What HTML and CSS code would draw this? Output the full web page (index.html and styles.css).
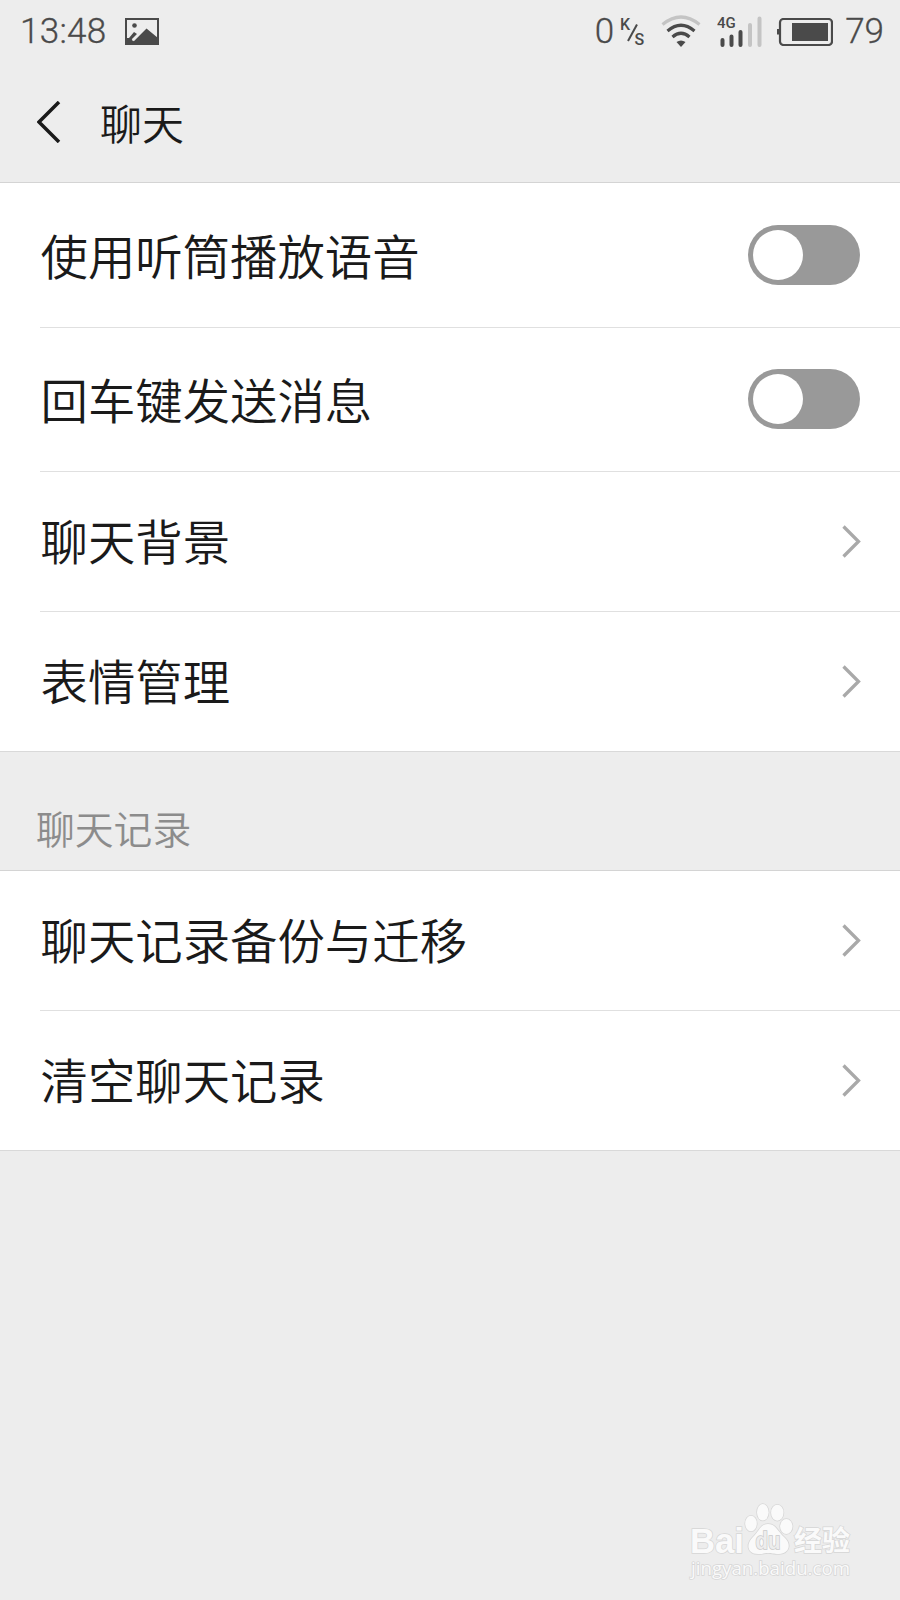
FILE: index.html
```html
<!DOCTYPE html>
<html lang="zh-CN">
<head>
    <meta charset="UTF-8">
    <meta name="viewport" content="width=device-width, initial-scale=1.0">
    <title>聊天</title>
    <link rel="stylesheet" href="styles.css">
</head>
<body>
    <div class="statusbar">
        <span class="time">13:48</span>
        <svg class="icon-photo" width="34" height="28" viewBox="0 0 34 28">
            <path d="M1 1H33V26H1Z" fill="none" stroke="#4a4a4a" stroke-width="2"/>
            <path d="M1 20L4 20L9 14L12 16L7 21L9 23L21.500 10.500L33 20V27H1Z" fill="#4a4a4a"/>
            <path d="M7.500 22.500L13.500 16.500" stroke="#ededed" stroke-width="2"/>
            <circle cx="9.500" cy="7.500" r="2.300" fill="#4a4a4a"/>
        </svg>
        <div class="status-right">
            <span class="speed">0</span>
            <svg class="icon-rate" width="26" height="36" viewBox="0 -4 26 36">
                <text x="0" y="11.500" class="rate-text">K</text>
                <path d="M8 23L17 6.500" stroke="#4a4a4a" stroke-width="2"/>
                <text x="14.500" y="26.500" class="rate-text">S</text>
            </svg>
            <svg class="icon-wifi" width="40" height="34" viewBox="0 0 40 34" fill="none" stroke-width="3.200">
                <path d="M1.500 9.500Q20 -5.500 38.500 9.500" stroke="#c4c4c4"/>
                <path d="M6.500 16Q20 4.500 33.500 16" stroke="#4a4a4a"/>
                <path d="M11.500 22Q20 14.500 28.500 22" stroke="#4a4a4a"/>
                <path d="M15.500 27Q20 24 24.500 27L20 32Z" fill="#4a4a4a" stroke="none"/>
            </svg>
            <svg class="icon-signal" width="46" height="36" viewBox="0 -2 46 36" stroke-width="4" stroke-linecap="round">
                <text x="0" y="12" class="net-text">4G</text>
                <path d="M5.500 24V29M14.500 20.500V29M23.500 16V29" stroke="#4a4a4a"/>
                <path d="M33 9V29M42.500 2.500V29" stroke="#c4c4c4"/>
            </svg>
            <svg class="icon-battery" width="56" height="28" viewBox="0 0 56 28">
                <rect x="3" y="1" width="52" height="26" rx="3.500" fill="none" stroke="#4a4a4a" stroke-width="2.200"/>
                <rect x="0" y="11" width="3" height="5.500" fill="#4a4a4a"/>
                <rect x="15" y="5" width="36" height="18" fill="#4a4a4a"/>
            </svg>
            <span class="battery-level">79</span>
        </div>
    </div>

    <div class="header">
        <svg class="back" width="24" height="42" viewBox="0 0 24 42">
            <path d="M22 1L2 21L22 41" fill="none" stroke="#1a1a1a" stroke-width="3.500"/>
        </svg>
        <h1>聊天</h1>
    </div>

    <ul class="list">
        <li class="item tall">
            <span class="label">使用听筒播放语音</span>
            <span class="switch"></span>
        </li>
        <li class="item tall">
            <span class="label">回车键发送消息</span>
            <span class="switch"></span>
        </li>
        <li class="item">
            <span class="label">聊天背景</span>
            <svg class="arrow" width="18" height="32" viewBox="0 0 18 32"><path d="M1.500 0.500L16.500 15.500L1.500 30.500"/></svg>
        </li>
        <li class="item">
            <span class="label">表情管理</span>
            <svg class="arrow" width="18" height="32" viewBox="0 0 18 32"><path d="M1.500 0.500L16.500 15.500L1.500 30.500"/></svg>
        </li>
    </ul>

    <h2>聊天记录</h2>

    <ul class="list">
        <li class="item">
            <span class="label">聊天记录备份与迁移</span>
            <svg class="arrow" width="18" height="32" viewBox="0 0 18 32"><path d="M1.500 0.500L16.500 15.500L1.500 30.500"/></svg>
        </li>
        <li class="item">
            <span class="label">清空聊天记录</span>
            <svg class="arrow" width="18" height="32" viewBox="0 0 18 32"><path d="M1.500 0.500L16.500 15.500L1.500 30.500"/></svg>
        </li>
    </ul>

    <svg class="watermark" width="170" height="84" viewBox="0 0 170 84">
        <text x="2" y="53.500" class="wm-logo" textLength="54" lengthAdjust="spacingAndGlyphs">Bai</text>
        <g class="wm-paw">
            <ellipse cx="63" cy="24.500" rx="5.800" ry="7.800"/>
            <ellipse cx="74.800" cy="13.300" rx="5.800" ry="8.300"/>
            <ellipse cx="89.300" cy="13.700" rx="6.200" ry="8"/>
            <ellipse cx="98.300" cy="27.500" rx="6.200" ry="7.500"/>
            <path d="M80 25C88 25 90 33 96 38C105 46 100 55 91 55C85 55 84 54 80 54C76 54 75 55 70 55C60 55 57 46 65 38C71 33 72 25 80 25Z"/>
        </g>
        <text x="67.500" y="50" class="wm-du" textLength="25" lengthAdjust="spacingAndGlyphs">du</text>
        <text x="106" y="52" class="wm-cn">经验</text>
        <text x="3" y="76" class="wm-url" textLength="159" lengthAdjust="spacingAndGlyphs">jingyan.baidu.com</text>
    </svg>
</body>
</html>
```

FILE: styles.css
```css
* {
    box-sizing: border-box;
}
body {
    margin: 0;
    height: 1600px;
    position: relative;
    overflow: hidden;
    background-color: #ededed;
    color: #1a1a1a;
    font-family: "Noto Sans CJK SC", sans-serif;
    font-weight: 350;
}
.statusbar {
    display: flex;
    align-items: center;
    height: 62px;
    padding: 1px 16px 0 20px;
    color: #4a4a4a;
    font-family: Roboto, sans-serif;
    font-size: 35px;
    font-weight: 360;
    -webkit-text-stroke: 0.3px #4a4a4a;
}
.time {
    letter-spacing: 0.3px;
}
.icon-photo {
    margin-left: 18px;
}
.status-right {
    display: flex;
    align-items: center;
    margin-left: auto;
}
.icon-rate {
    margin: 0 15px 0 6px;
}
.rate-text {
    font-size: 16px;
    font-weight: 500;
    fill: #4a4a4a;
}
.icon-signal {
    margin: 0 14px 0 16px;
}
.net-text {
    font-size: 15px;
    font-weight: 500;
    fill: #4a4a4a;
}
.battery-level {
    margin-left: 12px;
}
.header {
    display: flex;
    align-items: center;
    height: 121px;
    padding: 0 0 0 37px;
    border-bottom: 1px solid #d4d4d4;
}
h1 {
    margin: 0 0 0 39px;
    padding-bottom: 1px;
    font-size: 42px;
    font-weight: 350;
    line-height: 60px;
}
.list {
    margin: 0;
    padding: 0;
    list-style: none;
    background-color: #fff;
    border-bottom: 1px solid #d9d9d9;
}
.item {
    display: flex;
    align-items: center;
    justify-content: space-between;
    height: 140px;
    margin-left: 40px;
    padding-right: 40px;
    border-bottom: 1px solid #e0e0e0;
    font-size: 47.400px;
}
.item.tall {
    height: 144.500px;
}
.item:last-child {
    height: 139px;
    border-bottom: none;
}
.label {
    padding: 0 0 4px 0.500px;
}
.tall .label {
    padding-bottom: 1px;
}
.switch {
    width: 112px;
    height: 60px;
    padding: 5px;
    border-radius: 30px;
    background-color: #999;
}
.switch::before {
    content: "";
    display: block;
    width: 50px;
    height: 50px;
    border-radius: 50%;
    background-color: #fff;
}
.arrow {
    overflow: visible;
}
.arrow path {
    fill: none;
    stroke: #a9a9a9;
    stroke-width: 3.300;
}
h2 {
    height: 119px;
    margin: 0;
    padding: 46px 0 0 36px;
    border-bottom: 1px solid #d4d4d4;
    color: #8c8c8c;
    font-size: 38.800px;
    font-weight: 350;
    line-height: 58px;
}
.watermark {
    position: absolute;
    left: 688px;
    top: 1499px;
    fill: #fafafa;
    stroke: #d6d6d6;
    stroke-width: 1.500px;
    paint-order: stroke;
}
.wm-logo {
    font: bold 35px "Liberation Sans", sans-serif;
}
.wm-du {
    font: bold 23px "Liberation Sans", sans-serif;
    fill: #ededed;
    stroke: #c9c9c9;
}
.wm-cn {
    font: bold 28px "Noto Sans CJK SC", sans-serif;
}
.wm-url {
    font: 17.500px "Open Sans", sans-serif;
}
```
